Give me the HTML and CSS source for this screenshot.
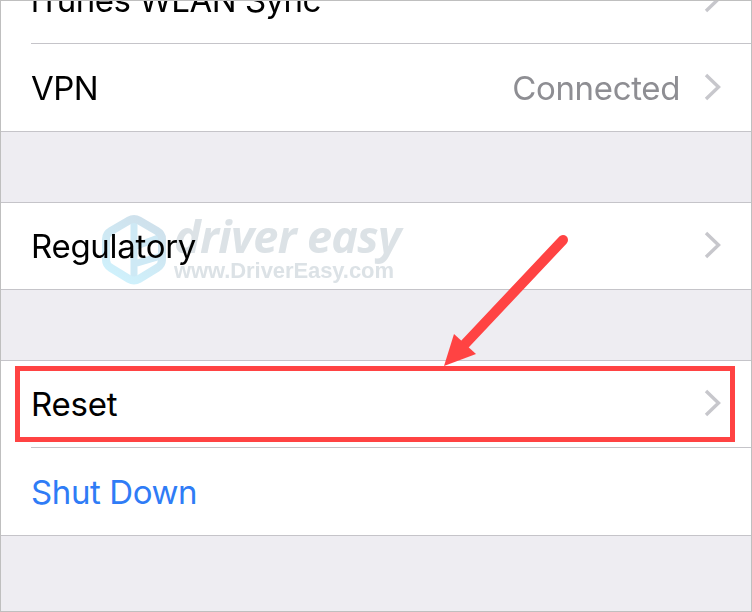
FILE: index.html
```
<!DOCTYPE html>
<html lang="en">
<head>
    <meta charset="UTF-8">
    <meta name="viewport" content="width=device-width, initial-scale=1.0">
    <title>Settings</title>
    <link rel="stylesheet" href="styles.css">
</head>
<body>
    <div class="screen">
        <div class="group group-top">
            <div class="row">
                <span class="label">iTunes WLAN Sync</span>
                <svg class="chevron" viewBox="0 0 18 28"><path d="M2 2 L14.5 14 L2 26"/></svg>
            </div>
            <div class="row">
                <span class="label">VPN</span>
                <span class="value">Connected</span>
                <svg class="chevron" viewBox="0 0 18 28"><path d="M2 2 L14.5 14 L2 26"/></svg>
            </div>
        </div>

        <div class="group">
            <div class="row single">
                <span class="label regulatory">Regulatory</span>
                <svg class="chevron" viewBox="0 0 18 28"><path d="M2 2 L14.5 14 L2 26"/></svg>
            </div>
            <!-- Watermark -->
            <div class="watermark">
                <svg class="logo" viewBox="0 0 66 72">
                    <defs>
                        <linearGradient id="hex" x1="0.8" y1="0" x2="0.3" y2="1">
                            <stop offset="0" stop-color="#cfe0eb"/>
                            <stop offset="1" stop-color="#cff1fc"/>
                        </linearGradient>
                    </defs>
                    <path class="bar" d="M33 6 V66 M33 33 L60 23 M33 50 L60 42"/>
                    <path class="hex" d="M28 6.5 Q33 3.5 38 6.5 L56 17 Q61 20 61 25 V46 Q61 51 56 54 L38 65 Q33 68 28 65 L10 54 Q5 51 5 46 V25 Q5 20 10 17 Z"/>
                </svg>
                <div class="mark-text">
                    <span class="brand">driver easy</span>
                    <span class="site">www.DriverEasy.com</span>
                </div>
            </div>
        </div>

        <div class="group">
            <div class="row">
                <span class="label reset">Reset</span>
                <svg class="chevron" viewBox="0 0 18 28"><path d="M2 2 L14.5 14 L2 26"/></svg>
            </div>
            <div class="row">
                <span class="label shutdown">Shut Down</span>
            </div>
            <div class="highlight"></div>
            <svg class="arrow" viewBox="0 0 130 140">
                <path class="shaft" d="M123 10 L25 114"/>
                <path class="head" d="M4 136 L14 104 L36 124 Z"/>
            </svg>
        </div>
    </div>
</body>
</html>
```
FILE: styles.css
```
* {
    box-sizing: border-box;
}
body {
    margin: 0;
    font-family: Inter, "Liberation Sans", sans-serif;
    font-size: 33px;
    color: #000;
}
.screen {
    width: 752px;
    height: 612px;
    border: 1px solid #bfbfbf;
    background: #eeedf2;
    overflow: hidden;
}
.group {
    position: relative;
    margin-bottom: 70px;
    padding-left: 30px;
    background: #fff;
    border-top: 1px solid #c5c4c9;
    border-bottom: 1px solid #c5c4c9;
}
.group-top {
    margin-top: -45px;
    border-top: none;
}
.row {
    display: flex;
    align-items: center;
    height: 87px;
    padding-right: 29px;
}
.row + .row {
    height: 88px;
    border-top: 1px solid #c5c4c9;
}
.row.single,
.group:last-child .row:first-child {
    height: 86px;
}
.label {
    flex: 1;
    letter-spacing: -0.5px;
    white-space: nowrap;
}
.regulatory {
    letter-spacing: -0.3px;
}
.reset {
    letter-spacing: -0.2px;
}
.value {
    margin-right: 24px;
    color: #8e8e93;
    letter-spacing: -0.35px;
}
.chevron {
    width: 18px;
    height: 28px;
    margin-bottom: 2px;
    fill: none;
    stroke: #c7c7cc;
    stroke-width: 3.4;
}
.shutdown {
    color: #2f7cf6;
    letter-spacing: -0.4px;
}

/* Watermark over the row */
.watermark {
    position: absolute;
    left: 100px;
    top: 11px;
    display: flex;
    mix-blend-mode: multiply;
}
.logo {
    width: 66px;
    height: 72px;
}
.hex,
.bar {
    fill: none;
    stroke: url(#hex);
    stroke-width: 8;
    stroke-linejoin: round;
}
.bar {
    stroke: #cee9f5;
    stroke-width: 7;
}
.mark-text {
    display: flex;
    flex-direction: column;
    margin-left: 7px;
    color: #dce2e6;
    white-space: nowrap;
}
.brand {
    font: italic 700 45px/44px "Open Sans", sans-serif;
    letter-spacing: -0.7px;
}
.site {
    font: bold 22px/25px "Liberation Sans", Arial, sans-serif;
    letter-spacing: -0.08px;
}

/* Callout */
.highlight {
    position: absolute;
    left: 14px;
    top: 5px;
    width: 720px;
    height: 76px;
    border: 5px solid #ff4343;
}
.arrow {
    position: absolute;
    left: 439px;
    top: -131px;
    width: 130px;
    height: 140px;
}
.shaft {
    stroke: #ff4343;
    stroke-width: 10;
    stroke-linecap: round;
}
.head {
    fill: #ff4343;
}
```
